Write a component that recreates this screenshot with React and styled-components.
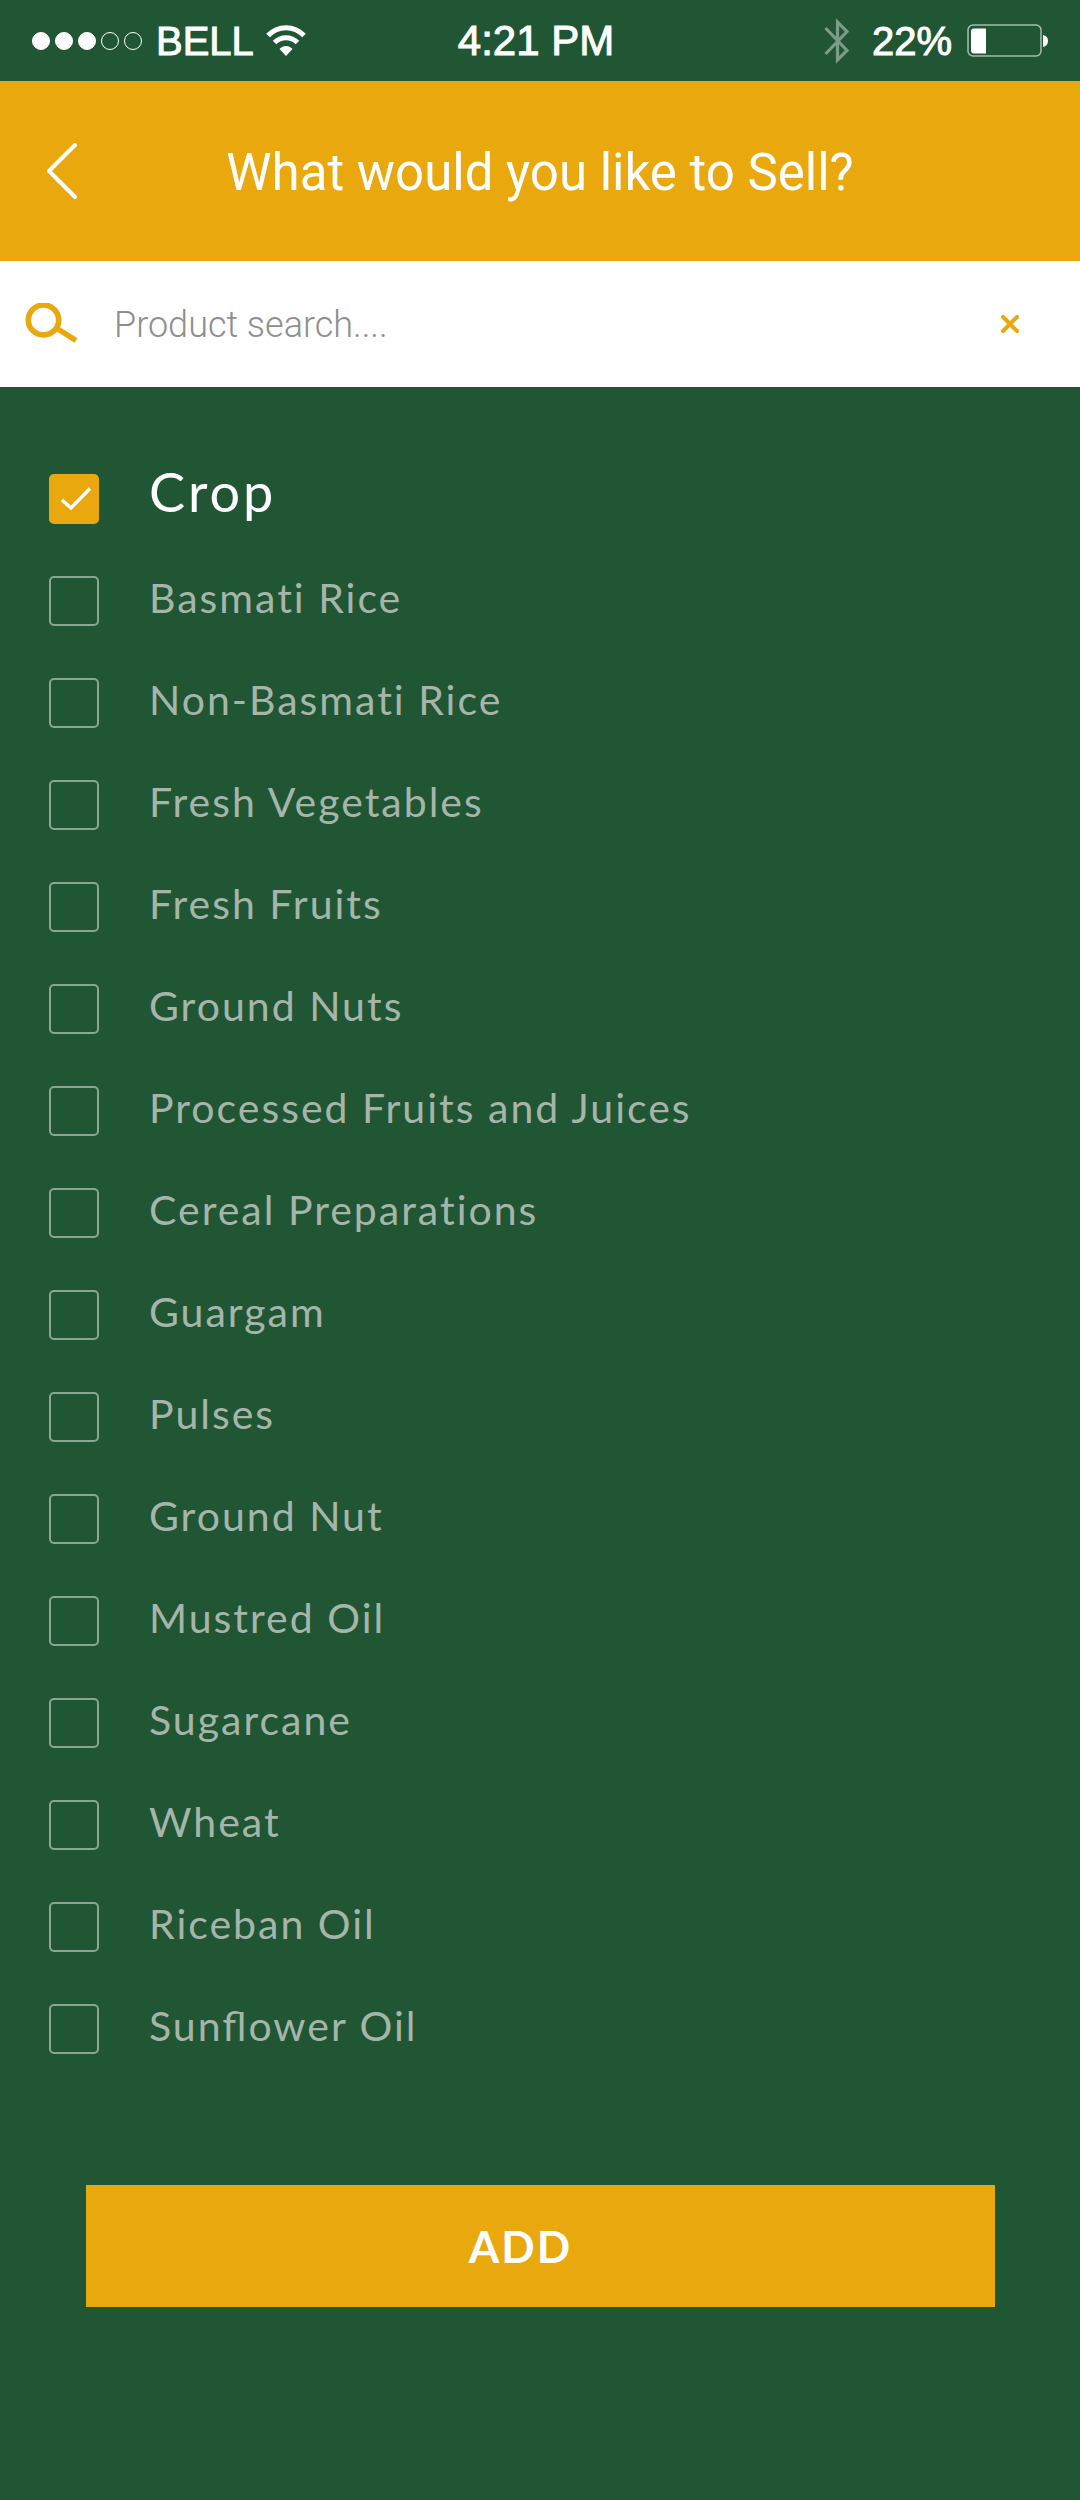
import React, { useState } from 'react';
import styled, { createGlobalStyle } from 'styled-components';

const green = '#205633';
const gold = '#e8a80e';

const GlobalStyle = createGlobalStyle`
  *, *::before, *::after { box-sizing: border-box; }
  body { margin: 0; background: ${green}; }
`;

const Screen = styled.div`
  display: flex;
  flex-direction: column;
  min-height: 100vh;
  background: ${green};
  color: #fff;
  font-family: Lato, sans-serif;
`;

const StatusBar = styled.div`
  display: grid;
  grid-template-columns: 1fr auto 1fr;
  align-items: center;
  height: 81px;
  padding: 0 32px;
  font-family: "Liberation Sans", sans-serif;
  font-size: 40px;
  line-height: 48px;
  -webkit-text-stroke: 1px #fff;
`;

const StatusGroup = styled.div`
  display: flex;
  align-items: center;
  justify-content: ${({ $end }) => ($end ? 'flex-end' : 'flex-start')};
  gap: 12px;
`;

const Signal = styled.div`
  display: flex;
  gap: 5px;
  padding-right: 2px;
`;

const Dot = styled.span`
  width: 18px;
  height: 18px;
  border: 1px solid #fff;
  border-radius: 50%;
  background: ${({ $on }) => ($on ? '#fff' : 'transparent')};
`;

const Clock = styled.time`
  padding-right: 8px;
  font-size: 42px;
`;

const Percent = styled.span`
  padding: 0 2px 0 10px;
`;

const Header = styled.header`
  display: grid;
  grid-template-columns: 60px 1fr 60px;
  align-items: center;
  height: 180px;
  padding: 0 32px;
  background: ${gold};
`;

const IconButton = styled.button`
  display: flex;
  align-items: center;
  justify-content: center;
  width: 60px;
  height: 60px;
  padding: 0;
  border: 0;
  background: none;
  color: ${({ $tone }) => $tone};
  cursor: pointer;
`;

const Title = styled.h1`
  margin: 0;
  padding-top: 4px;
  font: 400 51px/60px Roboto, sans-serif;
  text-align: center;
`;

const SearchBar = styled.form`
  display: flex;
  align-items: center;
  height: 126px;
  padding: 0 40px 0 24px;
  background: #fff;
`;

const SearchLabel = styled.label`
  display: flex;
  width: 90px;
`;

const SearchInput = styled.input`
  flex: 1;
  min-width: 0;
  height: 60px;
  padding: 2px 0 0;
  border: 0;
  outline: 0;
  background: none;
  color: #555;
  font: 300 36px/48px Roboto, sans-serif;

  &::placeholder { color: #8e8e8e; opacity: 1; }
`;

const List = styled.ul`
  margin: 0;
  padding: 61px 49px 0;
  list-style: none;
`;

const Row = styled.label`
  display: flex;
  align-items: center;
  height: 102px;
  cursor: pointer;
`;

const BoxCell = styled.span`
  display: grid;
  flex: none;
  width: 100px;
`;

const Box = styled.input`
  grid-area: 1 / 1;
  appearance: none;
  width: 50px;
  height: 50px;
  margin: 0;
  border: 2px solid #8aa693;
  border-radius: 5px;
  cursor: pointer;

  &:checked { border-color: ${gold}; background: ${gold}; }
`;

const Tick = styled.svg`
  grid-area: 1 / 1;
  pointer-events: none;
`;

const Name = styled.span`
  padding-bottom: ${({ $lead }) => ($lead ? '14px' : '6px')};
  color: ${({ $lead }) => ($lead ? '#fff' : '#a6b5aa')};
  font-size: ${({ $lead }) => ($lead ? '54px' : '41px')};
  line-height: ${({ $lead }) => ($lead ? '62px' : '48px')};
  letter-spacing: ${({ $lead }) => ($lead ? '3px' : '2px')};
  font-feature-settings: "liga" ${({ $ligatures }) => ($ligatures ? 1 : 0)};
`;

const AddButton = styled.button`
  height: 122px;
  margin: 105px 85px 0 86px;
  padding: 0 40px 0 0;
  border: 0;
  background: ${gold};
  color: #fff;
  font: 700 44px/54px Lato, sans-serif;
  letter-spacing: 2px;
  cursor: pointer;
`;

const PRODUCTS = [
  'Crop', 'Basmati Rice', 'Non-Basmati Rice', 'Fresh Vegetables', 'Fresh Fruits',
  'Ground Nuts', 'Processed Fruits and Juices', 'Cereal Preparations', 'Guargam',
  'Pulses', 'Ground Nut', 'Mustred Oil', 'Sugarcane', 'Wheat', 'Riceban Oil',
  'Sunflower Oil',
];

const WifiIcon = () => (
  <svg width="40" height="32" viewBox="0 0 40 32" fill="none" stroke="#fff" strokeWidth="5" aria-hidden="true">
    <path d="M2 10.500C12 0 28 0 38 10.500" />
    <path d="M8.500 17.500C15 11 25 11 31.500 17.500" />
    <path d="M13.500 24C17 20 23 20 26.500 24L20 31Z" fill="#fff" stroke="none" />
  </svg>
);

const BluetoothIcon = () => (
  <svg width="26" height="46" viewBox="0 0 26 46" fill="none" stroke="#7d9b87" strokeWidth="3.200" aria-hidden="true">
    <path d="M1.500 10L23 32.500L13.500 42V4L23 13.500L1.500 36" />
  </svg>
);

const BatteryIcon = () => (
  <svg width="82" height="34" viewBox="0 0 82 34" aria-hidden="true">
    <rect x="2" y="1" width="73" height="31" rx="5" fill="none" stroke="#a6bbad" strokeWidth="1.500" />
    <path d="M8 4.500H20V29.500H8Q5 29.500 5 26.500V7.500Q5 4.500 8 4.500Z" fill="#fff" />
    <path d="M77 11Q82 12 82 17T77 23Z" fill="#fff" />
  </svg>
);

const BackIcon = () => (
  <svg width="30" height="56" viewBox="0 0 30 56" fill="none" stroke="#fff" strokeWidth="4" strokeLinecap="round" strokeLinejoin="round" aria-hidden="true">
    <path d="M28 2L2 28L28 54" />
  </svg>
);

const SearchIcon = () => (
  <svg width="54" height="42" viewBox="0 0 54 42" fill="none" stroke={gold} aria-hidden="true">
    <ellipse cx="19.500" cy="17" rx="15.200" ry="15" strokeWidth="5.600" />
    <path d="M33 25.500L37 28L52 37.500" strokeWidth="5.600" />
  </svg>
);

const ClearIcon = () => (
  <svg width="18" height="18" viewBox="0 0 18 18" fill="none" stroke="currentColor" strokeWidth="4" strokeLinecap="round" aria-hidden="true">
    <path d="M2 2L16 16M16 2L2 16" />
  </svg>
);

export default function App() {
  const [query, setQuery] = useState('');
  const [picked, setPicked] = useState(['Crop']);
  const toggle = (name) =>
    setPicked((now) => (now.includes(name) ? now.filter((n) => n !== name) : [...now, name]));

  return (
    <Screen>
      <GlobalStyle />
      <StatusBar>
        <StatusGroup>
          <Signal>
            {[1, 2, 3, 4, 5].map((n) => <Dot key={n} $on={n <= 3} />)}
          </Signal>
          <span>BELL</span>
          <WifiIcon />
        </StatusGroup>
        <Clock>4:21 PM</Clock>
        <StatusGroup $end>
          <BluetoothIcon />
          <Percent>22%</Percent>
          <BatteryIcon />
        </StatusGroup>
      </StatusBar>
      <Header>
        <IconButton type="button" aria-label="Back" $tone="#fff"><BackIcon /></IconButton>
        <Title>What would you like to Sell?</Title>
      </Header>
      <SearchBar role="search" onSubmit={(e) => e.preventDefault()}>
        <SearchLabel htmlFor="product-search" aria-label="Product search"><SearchIcon /></SearchLabel>
        <SearchInput
          id="product-search"
          type="text"
          placeholder="Product search...."
          value={query}
          onChange={(e) => setQuery(e.target.value)}
        />
        <IconButton type="button" aria-label="Clear search" $tone={gold} onClick={() => setQuery('')}>
          <ClearIcon />
        </IconButton>
      </SearchBar>
      <List>
        {PRODUCTS.map((name, i) => (
          <li key={name}>
            <Row>
              <BoxCell>
                <Box type="checkbox" checked={picked.includes(name)} onChange={() => toggle(name)} />
                {picked.includes(name) && (
                  <Tick width="50" height="50" viewBox="0 0 50 50" fill="none" stroke="#fff" strokeWidth="3.400" aria-hidden="true">
                    <path d="M13 26L22 34L41 14.500" />
                  </Tick>
                )}
              </BoxCell>
              <Name $lead={i === 0} $ligatures={name.includes('fl')}>{name}</Name>
            </Row>
          </li>
        ))}
      </List>
      <AddButton type="button">ADD</AddButton>
    </Screen>
  );
}
